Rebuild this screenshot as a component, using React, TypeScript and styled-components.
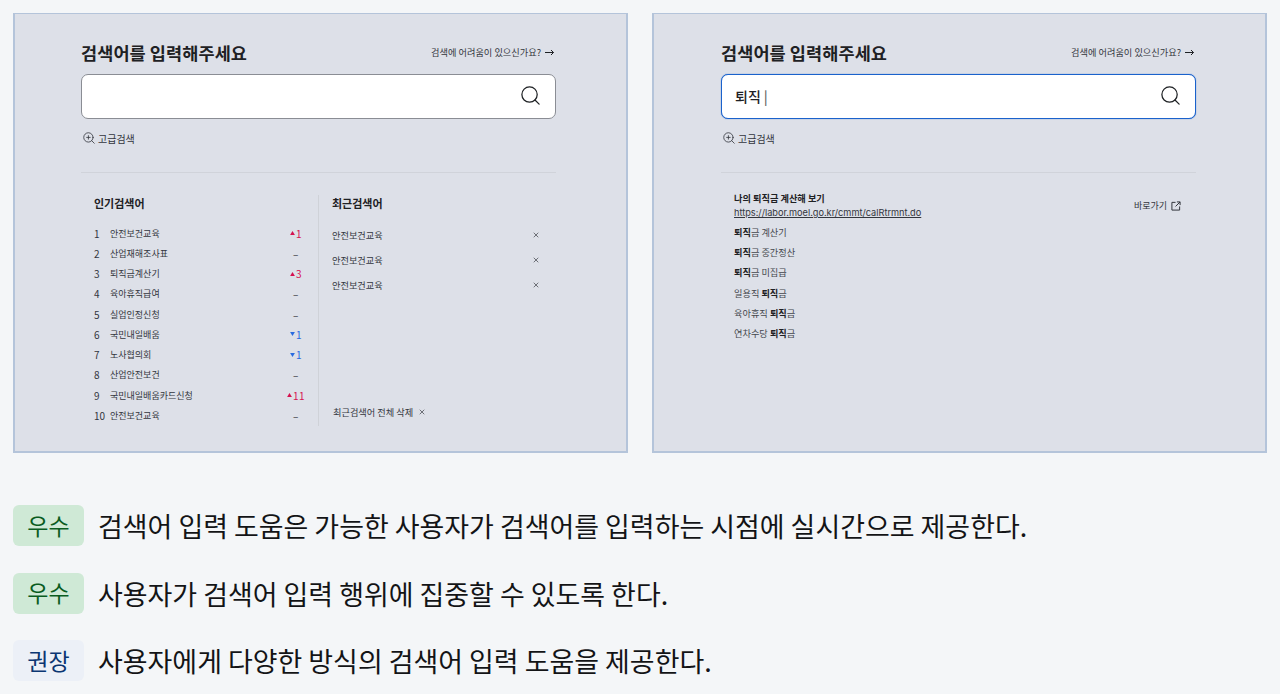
import styled, { createGlobalStyle } from "styled-components"
import { Search, ZoomIn, X } from "lucide-react"

const GlobalStyle = createGlobalStyle`
    html, body {
        margin: 0;
        padding: 0;
        background: #f4f6f8;
        font-family: "Noto Sans CJK KR", "Noto Sans", sans-serif;
        color: #1e2124;
    }
`
const Page = styled.div`
    width: 1280px;
    height: 694px;
    overflow: hidden;
    padding: 13px 12px 0 13px;
    box-sizing: border-box;
`
const Panels = styled.div`
    display: flex;
    gap: 24px;
`
const Panel = styled.section`
    width: 615px;
    height: 440px;
    box-sizing: border-box;
    background: #dde0e8;
    border: 1px solid #b4c4da;
    border-width: 1px 2px 2px 2px;
    padding: 24px 69px 0 67px;
    &:first-child {
        padding-left: 66px;
        padding-right: 70px;
    }
`
const TitleRow = styled.div`
    display: flex;
    justify-content: space-between;
    align-items: center;
    height: 28px;
    margin-bottom: 8px;
`
const Title = styled.h2`
    margin: 0;
    font-size: 17.5px;
    font-weight: 600;
    letter-spacing: 0.1px;
    color: #1e2124;
`
const HelpLink = styled.a`
    display: flex;
    align-items: center;
    gap: 4px;
    padding-right: 2px;
    font-size: 9.2px;
    color: #33363d;
`
const SearchBox = styled.div<{ $active?: boolean }>`
    display: flex;
    align-items: center;
    justify-content: space-between;
    height: 45px;
    box-sizing: border-box;
    padding: 0 13px 2px 13px;
    background: #fff;
    border-radius: 7px;
    border: 1px solid ${(p) => (p.$active ? "#1a62cc" : "#8a8d94")};
    box-shadow: ${(p) => (p.$active ? "0 0 1px #1a62cc" : "none")};
    font-size: 14px;
    font-weight: 500;
`
const Caret = styled.span`
    color: #666;
    font-weight: 500;
    margin-left: 3px;
`
const AdvancedRow = styled.div`
    display: flex;
    align-items: center;
    gap: 2px;
    margin: 12px 0 0 1px;
    height: 14px;
    font-size: 10px;
    color: #33363d;
`
const Divider = styled.hr`
    margin: 27px 0 0;
    border: 0;
    height: 1px;
    background: #d0d3da;
`
const Columns = styled.div`
    display: flex;
    margin-top: 22px;
    height: 231px;
`
const PopularColumn = styled.div`
    width: 238px;
    box-sizing: border-box;
    padding: 0 12px 0 13px;
    border-right: 1px solid #cfd2d8;
`
const RecentColumn = styled.div`
    flex: 1;
    display: flex;
    flex-direction: column;
    padding: 0 16px 0 13px;
`
const ColumnTitle = styled.h3`
    margin: 0;
    height: 18px;
    line-height: 16px;
    font-size: 11px;
    font-weight: 700;
`
const RankList = styled.ol`
    list-style: none;
    margin: 10px 0 0;
    padding: 0;
`
const RankRow = styled.li`
    display: flex;
    align-items: center;
    height: 20.25px;
    font-size: 9px;
    color: #33363d;
`
const RankNumber = styled.span`
    width: 16px;
    font-size: 10px;
`
const RankLabel = styled.span`
    flex: 1;
`
const Change = styled.span<{ $dir: "up" | "down" | "same" }>`
    display: flex;
    align-items: center;
    justify-content: center;
    gap: 1px;
    width: 20px;
    font-size: 10px;
    letter-spacing: 0.5px;
    color: ${(p) => (p.$dir === "up" ? "#d5114f" : p.$dir === "down" ? "#2a6be0" : "#33363d")};
`
const Tri = styled.svg`
    width: 5px;
    height: 4px;
    fill: currentColor;
`
const RecentList = styled.ul`
    list-style: none;
    margin: 10px 0 0;
    padding: 0;
    flex: 1;
`
const RecentRow = styled.li`
    display: flex;
    align-items: center;
    justify-content: space-between;
    height: 24.7px;
    font-size: 9.2px;
    color: #33363d;
`
const ClearAll = styled.div`
    display: flex;
    align-items: center;
    gap: 5px;
    height: 14px;
    margin: 0 0 7px 1px;
    font-size: 9.2px;
    color: #33363d;
`
const Suggestions = styled.div`
    padding: 18px 15px 0 13px;
`
const TopSuggestion = styled.div`
    display: flex;
    justify-content: space-between;
    align-items: center;
    margin-bottom: 3px;
`
const SuggestionTitle = styled.div`
    font-size: 9.2px;
    font-weight: 700;
    line-height: 15px;
`
const SuggestionUrl = styled.div`
    font-family: Inter, sans-serif;
    font-size: 9.2px;
    line-height: 13px;
    color: #33363d;
    text-decoration: underline;
`
const GoLink = styled.a`
    display: flex;
    align-items: center;
    gap: 4px;
    margin-top: 1px;
    font-size: 9px;
    color: #33363d;
`
const Suggestion = styled.div`
    display: flex;
    align-items: center;
    height: 20.2px;
    font-size: 9.2px;
    color: #44474d;
    white-space: pre;

    b {
        color: #1e2124;
        font-weight: 700;
    }
`
const Rules = styled.div`
    display: flex;
    flex-direction: column;
    gap: 26.5px;
    margin-top: 52px;
`
const Rule = styled.div`
    display: flex;
    align-items: center;
    gap: 14px;
`
const Badge = styled.span<{ $kind: "good" | "advise" }>`
    display: flex;
    align-items: center;
    justify-content: center;
    width: 71px;
    height: 41px;
    padding-bottom: 2px;
    box-sizing: border-box;
    border-radius: 6px;
    font-size: 23px;
    background: ${(p) => (p.$kind === "good" ? "#cfe9d6" : "#ecf0f7")};
    color: ${(p) => (p.$kind === "good" ? "#0a5c1f" : "#0b3672")};
`
const RuleText = styled.span`
    font-size: 26.94px;
    color: #131416;
`

const popular: { label: string; dir: "up" | "down" | "same"; n?: number }[] = [
    { label: "안전보건교육", dir: "up", n: 1 },
    { label: "산업재해조사표", dir: "same" },
    { label: "퇴직금계산기", dir: "up", n: 3 },
    { label: "육아휴직급여", dir: "same" },
    { label: "실업인정신청", dir: "same" },
    { label: "국민내일배움", dir: "down", n: 1 },
    { label: "노사협의회", dir: "down", n: 1 },
    { label: "산업안전보건", dir: "same" },
    { label: "국민내일배움카드신청", dir: "up", n: 11 },
    { label: "안전보건교육", dir: "same" },
]

function SearchHeader({ active, value }: { active?: boolean; value?: string }) {
    return (
        <>
            <TitleRow>
                <Title>검색어를 입력해주세요</Title>
                <HelpLink>
                    검색에 어려움이 있으신가요?
                    <svg width="9" height="7" viewBox="0 0 9 7" fill="none" stroke="#1e2124" strokeWidth="1">
                        <path d="M0 3.5H8.5M6 1L8.5 3.5L6 6" />
                    </svg>
                </HelpLink>
            </TitleRow>
            <SearchBox $active={active}>
                <span>
                    {value}
                    {value && <Caret>|</Caret>}
                </span>
                <Search size={23} strokeWidth={1.3} />
            </SearchBox>
            <AdvancedRow>
                <ZoomIn size={14} strokeWidth={1.4} />
                고급검색
            </AdvancedRow>
            <Divider />
        </>
    )
}

export default function App() {
    return (
        <Page>
            <GlobalStyle />
            <Panels>
                <Panel>
                    <SearchHeader />
                    <Columns>
                        <PopularColumn>
                            <ColumnTitle>인기검색어</ColumnTitle>
                            <RankList>
                                {popular.map((item, index) => (
                                    <RankRow key={index}>
                                        <RankNumber>{index + 1}</RankNumber>
                                        <RankLabel>{item.label}</RankLabel>
                                        <Change $dir={item.dir}>
                                            {item.dir !== "same" && (
                                                <Tri viewBox="0 0 6 5">
                                                    <polygon points={item.dir === "up" ? "3,0 6,5 0,5" : "0,0 6,0 3,5"} />
                                                </Tri>
                                            )}
                                            {item.n ?? "–"}
                                        </Change>
                                    </RankRow>
                                ))}
                            </RankList>
                        </PopularColumn>
                        <RecentColumn>
                            <ColumnTitle>최근검색어</ColumnTitle>
                            <RecentList>
                                {[0, 1, 2].map((i) => (
                                    <RecentRow key={i}>
                                        안전보건교육
                                        <X size={8} strokeWidth={2} />
                                    </RecentRow>
                                ))}
                            </RecentList>
                            <ClearAll>
                                최근검색어 전체 삭제
                                <X size={8} strokeWidth={2} />
                            </ClearAll>
                        </RecentColumn>
                    </Columns>
                </Panel>
                <Panel>
                    <SearchHeader active value="퇴직" />
                    <Suggestions>
                        <TopSuggestion>
                            <div>
                                <SuggestionTitle>나의 퇴직금 계산해 보기</SuggestionTitle>
                                <SuggestionUrl>https://labor.moel.go.kr/cmmt/calRtrmnt.do</SuggestionUrl>
                            </div>
                            <GoLink>
                                바로가기
                                <svg width="10" height="10" viewBox="0 0 11 11" fill="none" stroke="#33363d" strokeWidth="1.1">
                                    <path d="M5 1.5H1V10H9.5V6" />
                                    <path d="M6.5 1H10V4.5M10 1L5 6" />
                                </svg>
                            </GoLink>
                        </TopSuggestion>
                        <Suggestion><b>퇴직</b>금 계산기</Suggestion>
                        <Suggestion><b>퇴직</b>금 중간정산</Suggestion>
                        <Suggestion><b>퇴직</b>금 미집급</Suggestion>
                        <Suggestion>일용직 <b>퇴직</b>금</Suggestion>
                        <Suggestion>육아휴직 <b>퇴직</b>금</Suggestion>
                        <Suggestion>연차수당 <b>퇴직</b>금</Suggestion>
                    </Suggestions>
                </Panel>
            </Panels>
            <Rules>
                <Rule>
                    <Badge $kind="good">우수</Badge>
                    <RuleText>검색어 입력 도움은 가능한 사용자가 검색어를 입력하는 시점에 실시간으로 제공한다.</RuleText>
                </Rule>
                <Rule>
                    <Badge $kind="good">우수</Badge>
                    <RuleText>사용자가 검색어 입력 행위에 집중할 수 있도록 한다.</RuleText>
                </Rule>
                <Rule>
                    <Badge $kind="advise">권장</Badge>
                    <RuleText>사용자에게 다양한 방식의 검색어 입력 도움을 제공한다.</RuleText>
                </Rule>
            </Rules>
        </Page>
    )
}
